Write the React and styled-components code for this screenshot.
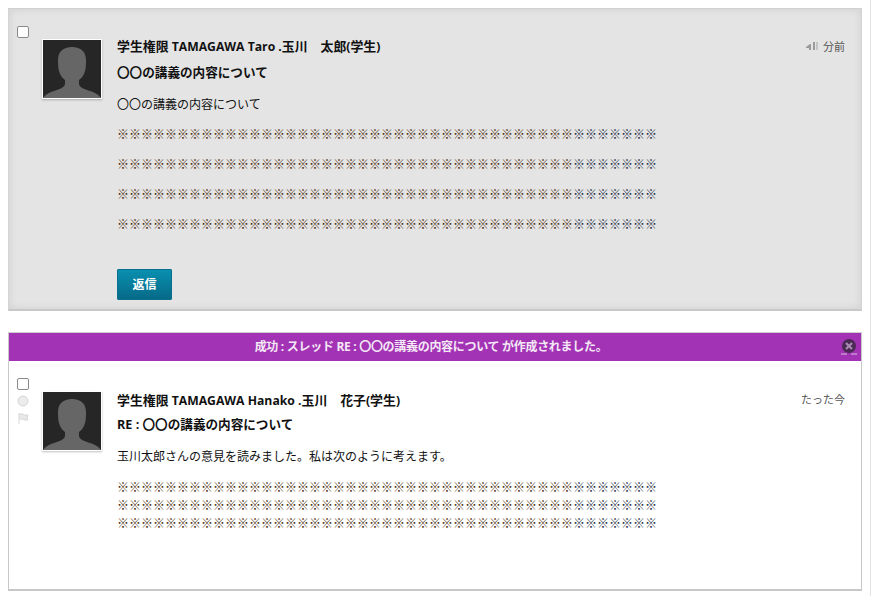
import React from 'react';
import styled, { createGlobalStyle } from 'styled-components';

const GlobalStyle = createGlobalStyle`
  html, body {
    margin: 0;
    padding: 0;
    background: #fff;
    overflow: hidden;
  }
  body {
    font-family: "Open Sans", "Noto Sans CJK JP", sans-serif;
    font-size: 12px;
    color: #111;
  }
`;

const Page = styled.div`
  box-sizing: border-box;
  width: 871px;
  height: 596px;
  padding: 8px 8px 0;
  border-right: 1px solid #e2e2e2;
  display: flex;
  flex-direction: column;
  gap: 21px;
`;

const Card = styled.section`
  box-sizing: border-box;
  width: 854px;
  height: ${(p) => p.$height}px;
  background: ${(p) => (p.$muted ? '#e4e4e4' : '#fff')};
  border: 1px solid ${(p) => (p.$muted ? '#d4d4d4' : '#c9c9c9')};
  border-top-color: #d0d0d0;
  border-bottom: 2px solid #c8c8c8;
  box-shadow: ${(p) => (p.$muted ? 'inset 0 0 8px rgba(0, 0, 0, 0.09)' : 'none')};
`;

const Alert = styled.div`
  position: relative;
  height: 28px;
  padding-right: 8px;
  display: flex;
  align-items: center;
  justify-content: center;
  background: #a333b5;
  color: #f4e8f6;
  font-weight: 700;
  line-height: 28px;
  letter-spacing: -0.3px;
`;

const CloseIcon = styled.svg`
  position: absolute;
  right: 3px;
  top: 5px;
`;

const Post = styled.div`
  display: grid;
  grid-template-columns: 25px 75px 1fr auto;
  padding: ${(p) => p.$top}px 16px 0 8px;
`;

const Marks = styled.div`
  display: flex;
  flex-direction: column;
  align-items: flex-start;
  gap: ${(p) => p.$gap || 4}px;
`;

const Check = styled.span`
  display: block;
  box-sizing: border-box;
  width: 12px;
  height: 12px;
  background: #fff;
  border: 1px solid #8a8a8a;
  border-radius: 2px;
`;

const MarkIcon = styled.svg`
  display: block;
`;

const Avatar = styled.div`
  box-sizing: content-box;
  width: 58px;
  height: 58px;
  margin-top: ${(p) => p.$offset}px;
  border: 1px solid #fff;
  box-shadow: 0 1px 2px rgba(0, 0, 0, 0.25);
  background: #262626;
  line-height: 0;
`;

const Main = styled.div`
  min-width: 0;
`;

const Name = styled.div`
  font-weight: 700;
  font-size: 12.2px;
  line-height: 18px;
  margin-top: ${(p) => p.$offset}px;
`;

const Ja = styled.span`
  font-size: 12.9px;
`;

const Subject = styled.div`
  font-weight: 700;
  font-size: 12.6px;
  line-height: 18px;
  margin-top: ${(p) => p.$gap}px;
`;

const Text = styled.p`
  margin: ${(p) => p.$gap}px 0 0;
  line-height: 18px;
`;

const Time = styled.div`
  display: flex;
  align-items: center;
  gap: 3px;
  height: 18px;
  margin-top: ${(p) => p.$offset}px;
  color: #555;
  font-size: 11px;
`;

const Blur = styled.svg`
  display: block;
`;

const Lines = styled.div`
  margin-top: ${(p) => p.$gap}px;
  display: flex;
  flex-direction: column;
  gap: ${(p) => p.$spacing}px;
`;

const Mark = styled.div`
  line-height: 18px;
  height: 18px;
  white-space: nowrap;
  font-family: "Noto Sans CJK JP", sans-serif;
  font-size: 12px;
  color: #4a2a0e;
`;

const MarkTail = styled.span`
  color: #222c44;
`;

const Reply = styled.button`
  display: block;
  width: 55px;
  height: 31px;
  margin-top: 36px;
  padding: 0 0 2px;
  border: 1px solid #0a6f8c;
  border-radius: 1px;
  background: linear-gradient(#0a8fb0, #066a88);
  color: #fff;
  font: 700 12px "Open Sans", "Noto Sans CJK JP", sans-serif;
`;

const MarkRow = () => (
  <Mark>
    {'※'.repeat(38)}
    <MarkTail>{'※'.repeat(7)}</MarkTail>
  </Mark>
);

const Person = () => (
  <svg width="58" height="58" viewBox="0 0 58 58">
    <path
      d="M29 7c-9 0-14 5-14 13 0 3 0 8 1 11 1 4 3 7 6 9v4c0 3-5 5-11 7-4 1-8 3-11 7h58c-3-4-7-6-11-7-6-2-11-4-11-7v-4c3-2 5-5 6-9 1-3 1-8 1-11 0-8-5-13-14-13z"
      fill="#666"
    />
  </svg>
);

export default function App() {
  return (
    <Page>
      <GlobalStyle />
      <Card $muted $height={303}>
        <Post $top={17}>
          <Marks>
            <Check />
          </Marks>
          <Avatar $offset={13}>
            <Person />
          </Avatar>
          <Main>
            <Name $offset={11}>
              <Ja>学生権限</Ja> TAMAGAWA Taro .<Ja>玉川　太郎</Ja>(<Ja>学生</Ja>)
            </Name>
            <Subject $gap={8}>〇〇の講義の内容について</Subject>
            <Text $gap={14}>〇〇の講義の内容について</Text>
            <Lines $gap={11} $spacing={12}>
              <MarkRow />
              <MarkRow />
              <MarkRow />
              <MarkRow />
            </Lines>
            <Reply>返信</Reply>
          </Main>
          <Time $offset={11}>
            <Blur width="15" height="12" viewBox="0 0 15 12">
              <filter id="smudge">
                <feGaussianBlur stdDeviation="0.7" />
              </filter>
              <g filter="url(#smudge)" fill="#9a9a9a">
                <path d="M1 7l4-3h1v6H4V8H1z" />
                <rect x="8" y="2" width="2" height="8" />
                <rect x="11" y="2" width="2" height="8" fill="#c4c4c4" />
              </g>
            </Blur>
            分前
          </Time>
        </Post>
      </Card>
      <Card $height={259}>
        <Alert>
          成功 : スレッド RE : 〇〇の講義の内容について が作成されました。
          <CloseIcon width="18" height="18" viewBox="0 0 18 18">
            <circle cx="9" cy="8" r="7" fill="#4a2a55" />
            <path d="M6 5l6 6M12 5l-6 6" stroke="#a98ab0" strokeWidth="2.2" />
            <path d="M1 16h6M11 16h6" stroke="#d9c3de" strokeWidth="1" />
          </CloseIcon>
        </Alert>
        <Post $top={17}>
          <Marks $gap={5}>
            <Check />
            <MarkIcon width="12" height="12" viewBox="0 0 12 12">
              <circle cx="6" cy="6" r="5" fill="#ececec" stroke="#d5d5d5" />
            </MarkIcon>
            <MarkIcon width="12" height="13" viewBox="0 0 12 13">
              <path d="M2 1v11M2 2h4l1 1h4l-1 3 1 2H7L6 7H2" fill="#e8e8e8" stroke="#d8d8d8" />
            </MarkIcon>
          </Marks>
          <Avatar $offset={13}>
            <Person />
          </Avatar>
          <Main>
            <Name $offset={13}>
              <Ja>学生権限</Ja> TAMAGAWA Hanako .<Ja>玉川　花子</Ja>(<Ja>学生</Ja>)
            </Name>
            <Subject $gap={6}>RE : 〇〇の講義の内容について</Subject>
            <Text $gap={14}>玉川太郎さんの意見を読みました。私は次のように考えます。</Text>
            <Lines $gap={12} $spacing={0}>
              <MarkRow />
              <MarkRow />
              <MarkRow />
            </Lines>
          </Main>
          <Time $offset={12}>たった今</Time>
        </Post>
      </Card>
    </Page>
  );
}
